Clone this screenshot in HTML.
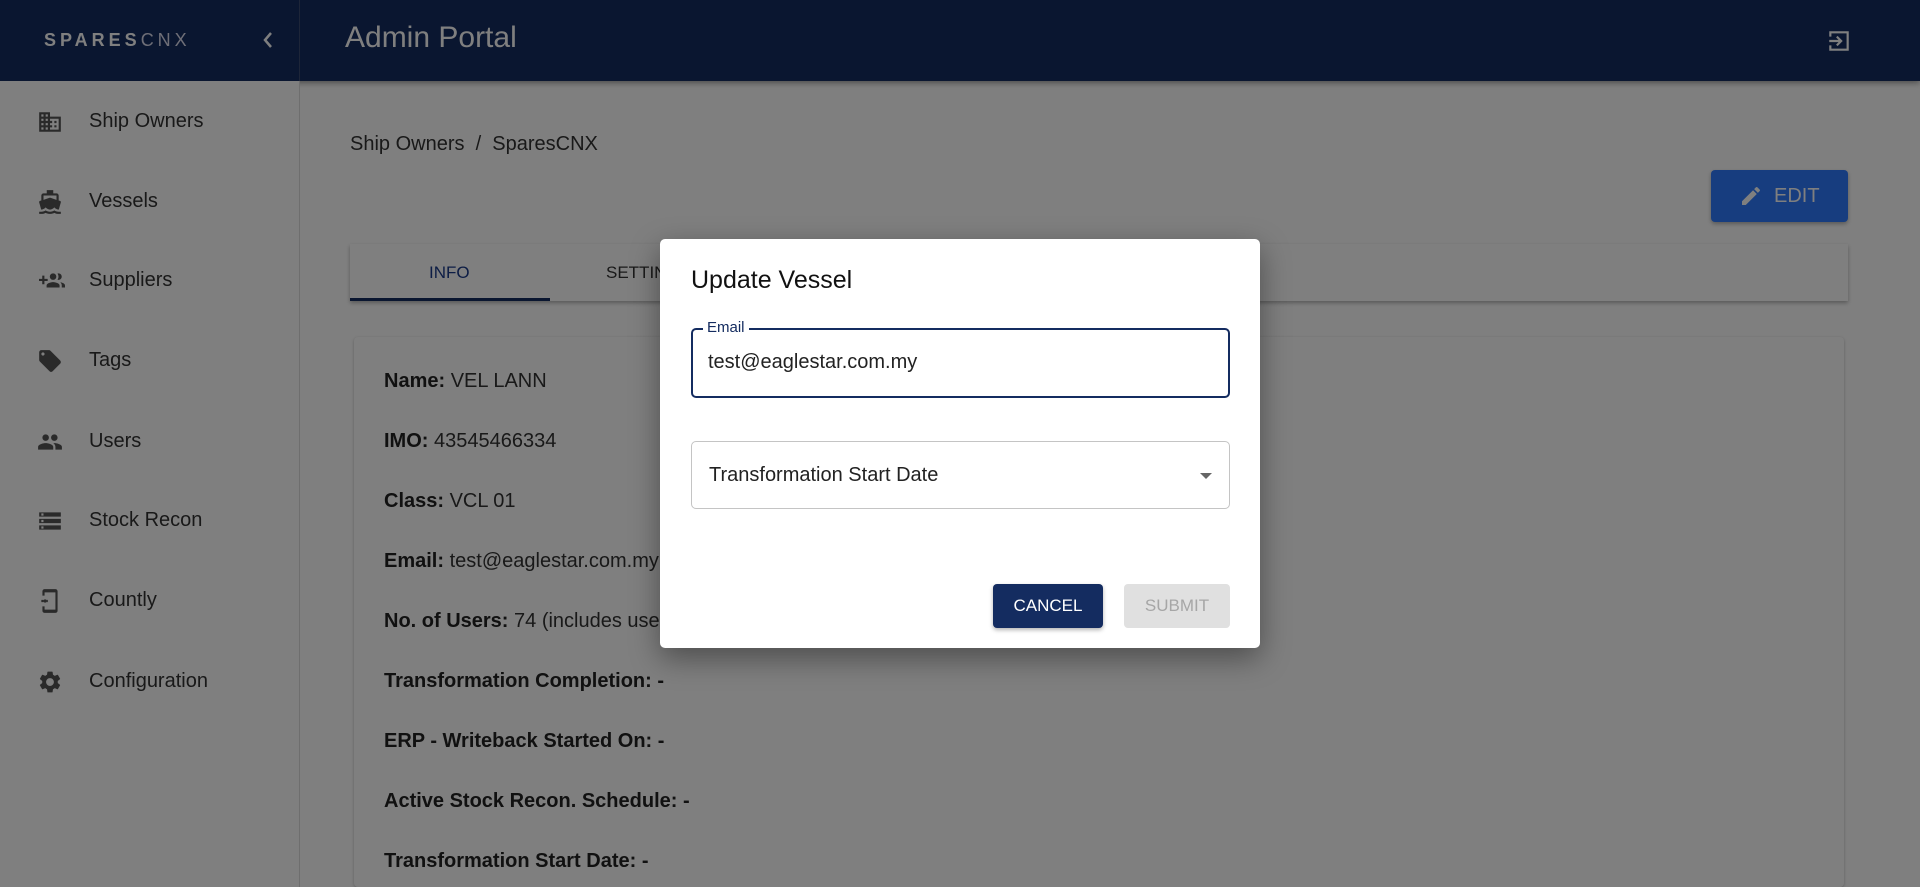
<!DOCTYPE html>
<html><head><meta charset="utf-8"><style>
*{box-sizing:border-box;margin:0;padding:0}
html{width:1920px;height:887px;overflow:hidden}
body{width:1920px;height:887px;overflow:hidden;font-family:"Liberation Sans",Arial,sans-serif;background:#fff;position:relative;color:#333}
.hdr{position:absolute;left:0;top:0;width:1920px;height:81px;background:#142c60;box-shadow:0 2px 6px rgba(0,0,0,.4)}
.logo{position:absolute;left:0;top:0;width:300px;height:81px;border-right:1px solid #3a4a70}
.logo span{position:absolute;left:44px;top:30px;font-size:18px;letter-spacing:4px;color:#fff;font-weight:bold;white-space:nowrap}
.logo span b{font-weight:normal;color:#dde}
.side{position:absolute;left:0;top:81px;width:300px;height:806px;border-right:1px solid #ddd;background:#fff}
.item{position:absolute;left:0;width:300px;height:40px;font-size:20px;color:#333}
.item svg{position:absolute;left:37px;top:8px}
.item span{position:absolute;left:89px;top:9px}
.ttl{position:absolute;left:345px;top:21px;font-size:30px;color:#fff}
.crumb{position:absolute;left:350px;top:133px;font-size:20px;color:#333}
.edit{position:absolute;left:1711px;top:170px;width:137px;height:52px;background:#2e7aff;border-radius:4px;color:#fff;font-size:20px;box-shadow:0 2px 4px rgba(0,0,0,.3)}
.tabs{position:absolute;left:350px;top:244px;width:1498px;height:57px;background:#fff;box-shadow:0 2px 4px rgba(0,0,0,.3)}
.tab{position:absolute;top:19px;font-size:17px;color:#1a3a8a}
.card{position:absolute;left:354px;top:337px;width:1490px;height:550px;background:#fff;border-radius:4px;box-shadow:0 1px 3px rgba(0,0,0,.25)}
.row{position:absolute;left:384px;font-size:20px;color:#333}
.row b{color:#222}
.ov{position:absolute;left:0;top:0;width:1920px;height:887px;background:rgba(0,0,0,.5)}
.dlg{position:absolute;left:660px;top:239px;width:600px;height:409px;background:#fff;border-radius:5px;box-shadow:0 10px 30px rgba(0,0,0,.4)}
.dt{position:absolute;left:31px;top:27px;font-size:25px;color:#111}
.f1{position:absolute;left:31px;top:89px;width:539px;height:70px;border:2px solid #142c60;border-radius:5px}
.f1 .lb{position:absolute;left:10px;top:-11px;background:#fff;padding:0 4px;font-size:15px;color:#142c60}
.f1 .v{position:absolute;left:15px;top:21px;font-size:20px;color:#222}
.f2{position:absolute;left:31px;top:202px;width:539px;height:68px;border:1px solid #c4c4c4;border-radius:5px}
.f2 .v{position:absolute;left:17px;top:22px;font-size:20px;color:#222}
.f2 .ar{position:absolute;right:17px;top:31px;width:0;height:0;border-left:6px solid transparent;border-right:6px solid transparent;border-top:6px solid #666}
.btn{position:absolute;top:345px;height:44px;border-radius:4px;font-size:17px;text-align:center;line-height:44px}
</style></head><body>
<div class="hdr">
<div class="logo"><span>SPARES<b>CNX</b></span>
<svg style="position:absolute;left:261px;top:30px" width="14" height="20" viewBox="0 0 14 20"><path d="M10 3 L4 10 L10 17" stroke="#fff" stroke-width="2.5" fill="none"/></svg></div>
<div class="ttl">Admin Portal</div>
<svg style="position:absolute;left:1826px;top:28px" width="26" height="26" viewBox="0 0 24 24"><path d="M4 8V4h16v16H4v-4" stroke="#fff" stroke-width="2" fill="none"/><path d="M3 12h11M10 8l4 4-4 4" stroke="#fff" stroke-width="2" fill="none"/></svg>
</div>
<div class="side">
<div class="item" style="top:20px"><svg width="26" height="26" viewBox="0 0 24 24" fill="#555"><path d="M12 7V3H2v18h20V7H12zM6 19H4v-2h2v2zm0-4H4v-2h2v2zm0-4H4V9h2v2zm0-4H4V5h2v2zm4 12H8v-2h2v2zm0-4H8v-2h2v2zm0-4H8V9h2v2zm0-4H8V5h2v2zm10 12h-8v-2h2v-2h-2v-2h2v-2h-2V9h8v10zm-2-8h-2v2h2v-2zm0 4h-2v2h2v-2z"/></svg><span>Ship Owners</span></div>
<div class="item" style="top:100px"><svg width="26" height="26" viewBox="0 0 24 24" fill="#555"><path d="M20 21c-1.4 0-2.8-.5-4-1.3-2.4 1.7-5.6 1.7-8 0C6.8 20.5 5.4 21 4 21H2v2h2c1.4 0 2.7-.3 4-1 2.5 1.3 5.5 1.3 8 0 1.3.7 2.600 1 4 1h2v-2h-2zM3.9 19H4c1.6 0 3-.9 4-2 1 1.1 2.4 2 4 2s3-.9 4-2c1 1.1 2.4 2 4 2h.1l1.9-6.7c.1-.3 0-.6-.1-.8-.1-.3-.4-.4-.7-.5L20 10.6V6c0-1.1-.9-2-2-2h-3V1H9v3H6c-1.1 0-2 .9-2 2v4.6l-1.3.4c-.3.1-.5.3-.6.5-.1.3-.2.6-.1.8L3.9 19zM6 6h12v4l-6-2-6 2V6z"/></svg><span>Vessels</span></div>
<div class="item" style="top:179px"><svg width="30" height="26" viewBox="0 0 24 24" fill="#555"><path d="M8 10H5V7H3v3H0v2h3v3h2v-3h3v-2zm10 1c1.66 0 2.99-1.340 2.99-3S19.66 5 18 5c-.32 0-.63.05-.91.14.57.81.9 1.79.9 2.86s-.34 2.04-.9 2.86c.28.09.59.14.91.14zm-5 0c1.66 0 2.99-1.34 2.99-3S14.66 5 13 5c-1.66 0-3 1.34-3 3s1.34 3 3 3zm6.62 2.16c.83.73 1.38 1.66 1.38 2.84v2h3v-2c0-1.54-2.37-2.49-4.38-2.84zM13 13c-2 0-6 1-6 3v2h12v-2c0-2-4-3-6-3z"/></svg><span>Suppliers</span></div>
<div class="item" style="top:259px"><svg width="26" height="26" viewBox="0 0 24 24" fill="#555"><path d="M21.41 11.58l-9-9C12.05 2.22 11.55 2 11 2H4c-1.1 0-2 .9-2 2v7c0 .55.22 1.05.59 1.42l9 9c.36.36.86.58 1.41.58.55 0 1.05-.22 1.41-.59l7-7c.37-.36.59-.86.59-1.41 0-.55-.23-1.06-.59-1.42zM5.5 7C4.67 7 4 6.33 4 5.5S4.67 4 5.5 4 7 4.67 7 5.5 6.33 7 5.5 7z"/></svg><span>Tags</span></div>
<div class="item" style="top:340px"><svg width="26" height="26" viewBox="0 0 24 24" fill="#555"><path d="M16 11c1.66 0 2.99-1.34 2.99-3S17.66 5 16 5c-1.66 0-3 1.34-3 3s1.34 3 3 3zm-8 0c1.66 0 2.99-1.34 2.99-3S9.66 5 8 5C6.34 5 5 6.34 5 8s1.34 3 3 3zm0 2c-2.33 0-7 1.17-7 3.5V19h14v-2.5c0-2.33-4.67-3.5-7-3.5zm8 0c-.29 0-.62.02-.97.05 1.160.84 1.97 1.97 1.97 3.45V19h6v-2.5c0-2.33-4.67-3.5-7-3.5z"/></svg><span>Users</span></div>
<div class="item" style="top:419px"><svg width="26" height="26" viewBox="0 0 24 24" fill="#555"><path d="M2 20h20v-4H2v4zm2-3h2v2H4v-2zM2 4v4h20V4H2zm4 3H4V5h2v2zm-4 7h20v-4H2v4zm2-3h2v2H4v-2z"/></svg><span>Stock Recon</span></div>
<div class="item" style="top:499px"><svg width="26" height="26" viewBox="0 0 24 24" fill="#555"><path d="M17 1H7c-1.1 0-2 .9-2 2v4h2V4h10v16H7v-3H5v4c0 1.1.9 2 2 2h10c1.1 0 2-.9 2-2V3c0-1.1-.9-2-2-2zM7.5 10.5a1.5 1.5 0 110 3 1.5 1.5 0 010-3zM4 11h2v2H4zm5 0h1v2H9z"/></svg><span>Countly</span></div>
<div class="item" style="top:580px"><svg width="26" height="26" viewBox="0 0 24 24" fill="#555"><path d="M19.14 12.94c.04-.3.06-.61.06-.94 0-.32-.02-.64-.07-.94l2.03-1.58a.49.49 0 00.12-.61l-1.92-3.32a.488.488 0 00-.59-.22l-2.39.96c-.5-.38-1.03-.7-1.62-.94l-.36-2.54a.484.484 0 00-.48-.41h-3.84c-.24 0-.43.17-.47.41l-.36 2.54c-.59.24-1.13.57-1.62.94l-2.390-.96c-.22-.08-.47 0-.59.22L2.74 8.87c-.12.21-.08.47.12.61l2.03 1.58c-.05.3-.09.63-.09.94s.02.64.07.94l-2.03 1.58a.49.49 0 00-.12.61l1.92 3.32c.12.22.37.29.59.22l2.39-.96c.5.38 1.03.7 1.62.94l.36 2.54c.05.24.24.41.48.41h3.84c.24 0 .44-.17.47-.41l.36-2.54c.59-.24 1.13-.56 1.62-.94l2.39.96c.22.08.47 0 .59-.22l1.92-3.32c.12-.22.07-.47-.12-.61l-2.01-1.58zM12 15.6c-1.98 0-3.6-1.62-3.6-3.6s1.62-3.6 3.6-3.6 3.6 1.62 3.6 3.6-1.62 3.6-3.6 3.6z"/></svg><span>Configuration</span></div>
</div>
<div class="crumb">Ship Owners&nbsp; / &nbsp;SparesCNX</div>
<div class="edit"><svg style="position:absolute;left:28px;top:14px" width="24" height="24" viewBox="0 0 24 24" fill="#fff"><path d="M3 17.25V21h3.75L17.81 9.94l-3.75-3.75L3 17.25zM20.71 7.04a1 1 0 000-1.41l-2.34-2.34a1 1 0 00-1.41 0l-1.83 1.83 3.75 3.75 1.83-1.83z"/></svg><span style="position:absolute;left:63px;top:15px">EDIT</span></div>
<div class="tabs"><div class="tab" style="left:79px">INFO</div><div style="position:absolute;left:0;bottom:0;width:200px;height:3px;background:#142c60"></div><div class="tab" style="left:256px;color:#333">SETTINGS</div></div>
<div class="card"></div>
<div class="row" style="top:370px"><b>Name:</b> VEL LANN</div>
<div class="row" style="top:430px"><b>IMO:</b> 43545466334</div>
<div class="row" style="top:490px"><b>Class:</b> VCL 01</div>
<div class="row" style="top:550px"><b>Email:</b> test@eaglestar.com.my</div>
<div class="row" style="top:610px"><b>No. of Users:</b> 74 (includes users)</div>
<div class="row" style="top:670px"><b>Transformation Completion: -</b></div>
<div class="row" style="top:730px"><b>ERP - Writeback Started On: -</b></div>
<div class="row" style="top:790px"><b>Active Stock Recon. Schedule: -</b></div>
<div class="row" style="top:850px"><b>Transformation Start Date: -</b></div>
<div class="ov"></div>
<div class="dlg">
<div class="dt">Update Vessel</div>
<div class="f1"><span class="lb">Email</span><span class="v">test@eaglestar.com.my</span></div>
<div class="f2"><span class="v">Transformation Start Date</span><span class="ar"></span></div>
<div class="btn" style="left:333px;width:110px;background:#142c60;color:#fff;box-shadow:0 2px 4px rgba(0,0,0,.3)">CANCEL</div>
<div class="btn" style="left:464px;width:106px;background:#e0e0e0;color:#a6a6a6">SUBMIT</div>
</div>
</body></html>
